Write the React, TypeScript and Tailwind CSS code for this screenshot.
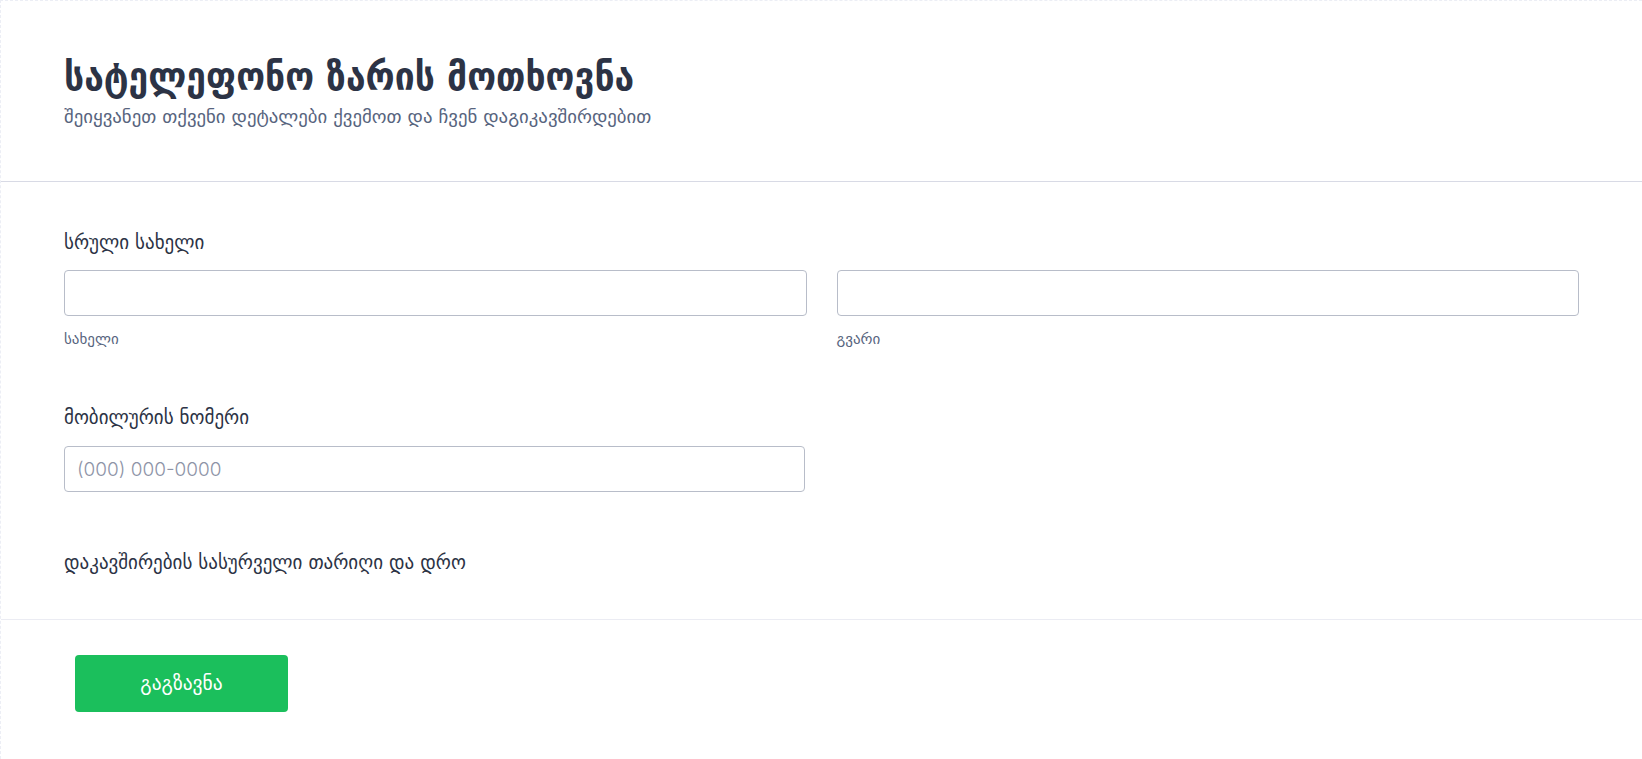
import React from 'react';

const body = { fontFamily: '"DejaVu Sans", sans-serif' };
const heading = { fontFamily: '"DejaVu Sans Condensed", "DejaVu Sans", sans-serif' };

export default function App() {
  return (
    <div className="min-h-screen w-full bg-white" style={body}>
      <div className="border-l border-t border-dashed border-[#eceef5]">
        {/* Header */}
        <header className="px-[63px] pt-[51px] pb-[51px] border-b border-[#d8dae5]">
          <h1 className="text-[39.4px] leading-[48px] font-bold text-[#2c3345]" style={heading}>
            სატელეფონო ზარის მოთხოვნა
          </h1>
          <p className="mt-[4px] text-[18.8px] leading-[26px] text-[#57647e]">
            შეიყვანეთ თქვენი დეტალები ქვემოთ და ჩვენ დაგიკავშირდებით
          </p>
        </header>

        {/* Fields */}
        <section className="px-[63px] pt-[47px] pb-[44px] border-b border-[#ebecf3]">
          <label className="block text-[19px] leading-[26px] text-[#2c3345]">სრული სახელი</label>
          <div className="mt-[15px] grid grid-cols-2 gap-[30px]">
            <div>
              <input className="block w-full h-[46px] rounded-[4px] border border-[#b8bdc9] bg-white px-3" />
              <span className="mt-[13px] block text-[15px] leading-[20px] text-[#57647e]">სახელი</span>
            </div>
            <div>
              <input className="block w-full h-[46px] rounded-[4px] border border-[#b8bdc9] bg-white px-3" />
              <span className="mt-[13px] block text-[15px] leading-[20px] text-[#57647e]">გვარი</span>
            </div>
          </div>

          <label className="mt-[55px] block text-[19px] leading-[26px] text-[#2c3345]">მობილურის ნომერი</label>
          <div className="mt-[16px] w-[741px]">
            <input
              placeholder="(000) 000-0000"
              className="block w-full h-[46px] rounded-[4px] border border-[#b8bdc9] bg-white px-[12px] text-[19px] text-[#2c3345] placeholder:text-[#8e94a7]"
              style={{ fontFamily: 'Inter, sans-serif', fontWeight: 300 }}
            />
          </div>

          <label className="mt-[57px] block text-[19px] leading-[26px] text-[#2c3345]">
            დაკავშირების სასურველი თარიღი და დრო
          </label>
        </section>

        {/* Footer */}
        <footer className="px-[74px] pt-[35px] pb-[47px]">
          <button className="w-[213px] h-[57px] rounded-[4px] bg-[#1bbf5c] text-white text-[19.5px]">
            გაგზავნა
          </button>
        </footer>
      </div>
    </div>
  );
}
